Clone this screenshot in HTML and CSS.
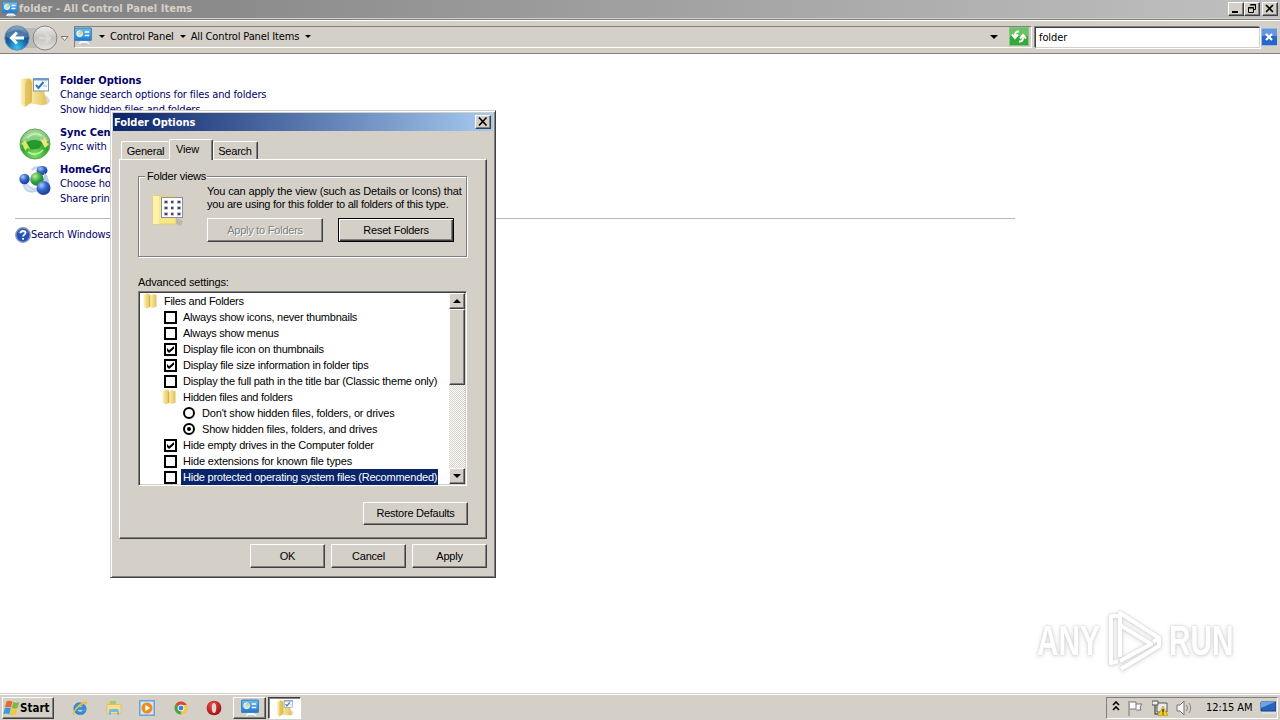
FILE: index.html
```html
<!DOCTYPE html>
<html lang="en">
<head>
<meta charset="utf-8">
<title>folder - All Control Panel Items</title>
<link rel="stylesheet" href="styles.css">
</head>
<body>
<svg class="defs" width="0" height="0">
  <defs>
    <linearGradient id="gold" x1="0" x2="1"><stop offset="0" stop-color="#fff3ae"/><stop offset=".45" stop-color="#e9c94e"/><stop offset=".55" stop-color="#fff0a0"/><stop offset="1" stop-color="#dcb74a"/></linearGradient>
    <linearGradient id="flap" x1="0" x2="1"><stop offset="0" stop-color="#fdf2b5"/><stop offset="1" stop-color="#e3c055"/></linearGradient>
    <linearGradient id="screen" x1="0" x2="0" y1="0" y2="1"><stop offset="0" stop-color="#6cc0f5"/><stop offset="1" stop-color="#2277c6"/></linearGradient>
    <radialGradient id="navblue" cx=".5" cy=".9" r=".9"><stop offset="0" stop-color="#35c8f2"/><stop offset=".45" stop-color="#1568ad"/><stop offset=".75" stop-color="#164b85"/><stop offset="1" stop-color="#8fb9dc"/></radialGradient>
    <linearGradient id="navgrey" x1="0" x2="0" y1="0" y2="1"><stop offset="0" stop-color="#efefed"/><stop offset=".5" stop-color="#c3c2bf"/><stop offset="1" stop-color="#e4e3e0"/></linearGradient>
    <radialGradient id="green" cx=".5" cy=".85" r=".9"><stop offset="0" stop-color="#7fe35b"/><stop offset=".5" stop-color="#2ba52b"/><stop offset="1" stop-color="#b9e3ad"/></radialGradient>
    <radialGradient id="ballblue" cx=".35" cy=".3" r=".8"><stop offset="0" stop-color="#a9cdf8"/><stop offset=".45" stop-color="#3566c8"/><stop offset="1" stop-color="#15318d"/></radialGradient>
    <radialGradient id="ballgreen" cx=".35" cy=".3" r=".8"><stop offset="0" stop-color="#b6f0a5"/><stop offset=".5" stop-color="#35a53c"/><stop offset="1" stop-color="#14702a"/></radialGradient>
    <radialGradient id="red" cx=".4" cy=".3" r=".8"><stop offset="0" stop-color="#e8504b"/><stop offset="1" stop-color="#960810"/></radialGradient>
    <symbol id="cpanel" viewBox="0 0 16 16">
      <path d="M6 12h5l3 3H4z" fill="#f5f8fb"/><rect x=".5" y="1" width="15" height="11" rx="1" fill="url(#screen)" stroke="#3a86c4"/>
      <circle cx="5" cy="6" r="2.600" fill="#bfe2f7" stroke="#fff" stroke-width=".8"/><path d="M5 6V3.400A2.600 2.600 0 0 1 7.600 6z" fill="#f2cf4a"/>
      <path d="M9.500 4.500h4M9.500 7.500h4" stroke="#fff" stroke-width="1.300"/><path d="M6 15h6" stroke="#aebac5"/>
    </symbol>
    <symbol id="folder" viewBox="0 0 16 16">
      <path d="M1.500 2 5 .5l3 1v12L5 15.500 1.500 14z" fill="url(#flap)"/><path d="M8 2.500 11 1l3.500 1v11.500L11 15l-3-1z" fill="url(#flap)"/><path d="M7.800 3v11" stroke="#c6a43d" stroke-width=".8"/>
    </symbol>
    <symbol id="folderopt" viewBox="0 0 32 32">
      <path d="M20 29c6 1 11-1 11-5l-4-5z" fill="#aaa" opacity=".45"/>
      <path d="M8 3h14l5 20 1 5-6 1-14-2z" fill="url(#flap)"/>
      <path d="M2 3 10 2q3 2 3 6v18l-7 5-4-3z" fill="url(#flap)"/><path d="M8 3q5 0 5 6v17l-7 5V9z" fill="#d9b24a" opacity=".55"/>
      <rect x="14.500" y="2.500" width="15" height="12.500" fill="#f7fbff" stroke="#7f95ac"/><path d="M14 3.500h16" stroke="#6c9dd0" stroke-width="2"/><path d="m17 9 2.500 3 5-6" fill="none" stroke="#2b75c5" stroke-width="2"/><path d="M24 10h4" stroke="#aab8c7"/>
    </symbol>
    <symbol id="e" viewBox="0 0 16 16">
      <path d="M14.300 9.600H5.400c.3 3.200 4.400 3.200 5.200 1.100h3.400C12.600 16.400 1.800 16 1.800 8.500c0-8 12.500-7.500 12.500 1.100zM5.400 7.200h5.400c-.3-2.800-5.100-2.800-5.400 0z" fill="#2f91dc" fill-rule="evenodd" stroke="#1767af" stroke-width=".5"/>
      <path d="M2.600 14.800C-.8 16.500.5 10.500 6 5.500c4.500-4 9.500-5.200 9-2.200-.1.700-.4 1.300-.8 2 .3-2.500-2.600-1.800-6.300 1C3.300 9.800 1.200 13.900 2.600 14.800z" fill="#e9bb40"/>
    </symbol>
  </defs>
</svg>

<div class="desktop">
  <header class="titlebar">
    <svg class="i16"><use href="#cpanel"/></svg>
    <span class="caption caption-main">folder - All Control Panel Items</span>
    <span class="winbtn"><svg width="13" height="11"><path d="M3 9h6" stroke="#000" stroke-width="2"/></svg></span>
    <span class="winbtn"><svg width="13" height="11"><path d="M5.500 1.500h5v5h-2M5 2h6M3 5h6M3.500 4.500v5h5v-5z" fill="none" stroke="#000"/></svg></span>
    <span class="winbtn gap"><svg width="13" height="11"><path d="m3 2 7 7m0-7-7 7" stroke="#000" stroke-width="1.600"/></svg></span>
  </header>

  <nav class="navbar">
    <svg class="arrows" width="70" height="30" viewBox="0 0 70 30">
      <rect x="18" y="5" width="28" height="20" fill="#bcbab6"/>
      <circle cx="17" cy="15" r="12.200" fill="url(#navblue)" stroke="#6f8fae"/><path d="M6 14a11 9.500 0 0 1 22 0q-11 3-22 0z" fill="#fff" opacity=".23"/>
      <path d="M24 15H12m5-5.500L11.500 15l5.500 5.500" fill="none" stroke="#fff" stroke-width="3"/>
      <circle cx="45" cy="15" r="12" fill="url(#navgrey)" stroke="#888682"/><path d="M39 15h11m-5-5 5 5-5 5" fill="none" stroke="#d9d8d5" stroke-width="2.500"/>
      <path d="M61 13.500h7l-3.500 4z" fill="#fff" stroke="#777"/>
    </svg>
    <div class="address">
      <svg class="i18 place"><use href="#cpanel"/></svg>
      <i class="tri t1"></i><span class="crumb">Control Panel</span>
      <i class="tri t2"></i><span class="crumb">All Control Panel Items</span>
      <i class="tri t3"></i>
      <i class="tri big"></i>
      <svg class="refresh" width="20" height="19" viewBox="0 0 20 19"><rect x=".5" y=".5" width="19" height="18" fill="#34a83a" stroke="#86c489"/><path d="M1 1h18v8H1z" fill="#6cc365"/><path d="M10 4.500Q6 4 6 9M3 7.500 6 11l3-3.500M10 14.500q4 .5 4-4M11 11.500 14 8l3 3.500" fill="none" stroke="#fff" stroke-width="2"/></svg>
    </div>
    <div class="search"><span class="query">folder</span></div>
    <svg class="clear" width="16" height="18" viewBox="0 0 16 18"><rect x=".5" y=".5" width="16" height="17" fill="#2866c9" stroke="#9bb8e4"/><path d="M1 1h15v7H1z" fill="#6695df"/><path d="m5 6 6 6m0-6-6 6" stroke="#fff" stroke-width="2.200"/></svg>
  </nav>

  <main class="content">
    <section class="entry e1">
      <svg class="i32"><use href="#folderopt"/></svg>
      <div class="links"><b>Folder Options</b><a>Change search options for files and folders</a><a class="narrow">Show hidden files and folders</a></div>
    </section>
    <section class="entry e2">
      <svg class="i32" viewBox="0 0 32 32"><circle cx="16" cy="16" r="15" fill="url(#green)" stroke="#5d9f59"/><path d="M3 13a13.500 12 0 0 1 26 0q-13 3-26 0z" fill="#fff" opacity=".35"/><path d="M8 14q7-4 15 0l-2 6q-5 2-10 1z" fill="#25992e"/><path d="m21 11 3 1q1-2 1-3 3 3 3 6l2 1-4 4z" fill="#f3e47e"/><path d="m11 21-3-1q-1 2-1 3-3-3-3-6l-2-1 4-4z" fill="#dbe66a"/><path d="M8 10q7-7 15-2M24 22q-7 7-15 2" fill="none" stroke="#c5eeb0" stroke-width="1.600"/></svg>
      <div class="links"><b>Sync Cen</b><a>Sync with</a></div>
    </section>
    <section class="entry e3">
      <svg class="i32" viewBox="0 0 32 32"><path d="M5 16q5 10 16 8-9 5-14 0-3-3-2-8M13 5q4-4 8-2M28 14q3 6-1 10" stroke="#c3d5eb" stroke-width="2.500" fill="none"/><ellipse cx="23" cy="5.500" rx="5.500" ry="4.500" fill="url(#ballblue)"/><circle cx="5.500" cy="14" r="5.200" fill="url(#ballblue)"/><path d="M25 8q5 2 4 9l-4 1z" fill="#b7cdea"/><circle cx="18" cy="14" r="6.800" fill="url(#ballgreen)"/><circle cx="24.500" cy="23" r="7" fill="url(#ballblue)"/></svg>
      <div class="links"><b>HomeGro</b><a>Choose ho</a><a>Share prin</a></div>
    </section>
    <div class="rule"></div>
    <div class="helpline">
      <svg class="i16" viewBox="0 0 16 16"><circle cx="8" cy="8" r="7.200" fill="#2451b5" stroke="#8795b8" stroke-width="1.500"/><path d="M3 6q5-7 10 0z" fill="#87aae8" opacity=".6"/><path d="M5.500 6.200C5.600 3 10.700 3.200 10.500 6c-.1 1.600-2.400 1.700-2.400 3.600M8.100 11v1.800" stroke="#fff" stroke-width="1.700" fill="none"/></svg>
      <a>Search Windows</a>
    </div>
    <div class="watermark">
      <span class="any">ANY</span>
      <svg width="58" height="66" viewBox="0 0 58 66"><g fill="none" stroke="#fff" stroke-width="4" stroke-linejoin="round"><path d="M13 8H6v47l7-2"/><path d="M15 49V5l39 25-6 4"/><path d="M15 17l31 19-31 17"/><path d="m16 61 38-23v-7"/></g></svg>
      <span class="run">RUN</span>
    </div>
  </main>

  <footer class="taskbar">
    <div class="start"><svg width="17" height="16" viewBox="0 0 17 16"><path d="M3.500 1.500q3-1.500 6 0L8 7.500q-3-1.400-6 0z" fill="#e8682f"/><path d="M10.200 2q3 1.400 6 0l-1.500 6q-3 1.300-6 0z" fill="#7eba43"/><path d="M1.800 8.200q3-1.400 6 0l-1.500 6q-3-1.400-6 0z" fill="#3b9bd9"/><path d="M8.500 8.700q3 1.400 6 0l-1.500 6q-3 1.300-6 0z" fill="#f5c83c"/></svg><b>Start</b></div>
    <div class="quick">
      <svg class="i16"><use href="#e"/></svg>
      <svg class="i16" viewBox="0 0 16 16"><path d="M1 2h5l1 1.500h7V9H1z" fill="#e8ce68"/><path d="M4 1h6v5H4z" fill="#a6c976"/><path d="M1 4.500h14v9H1z" fill="#f5df8d" stroke="#d5b65b" stroke-width=".6"/><path d="M3 15v-4q0-2 2-2h6q2 0 2 2v4h-2v-3H5v3z" fill="#75b9e5"/></svg>
      <svg class="i16" viewBox="0 0 16 16"><rect x=".8" y=".8" width="14.400" height="14.400" fill="#d4e8f8" stroke="#5fa0d8" stroke-width="1.400"/><circle cx="8" cy="8" r="5.500" fill="#f08a1c"/><path d="M6.300 4.800v6.400L11 8z" fill="#fff"/></svg>
      <svg class="i16" viewBox="0 0 16 16"><circle cx="8" cy="8" r="6.500" fill="#ddb72e"/><path d="M8 8 2.400 4.700A6.500 6.500 0 0 1 13.700 5H8z" fill="#d94638"/><path d="M2.400 4.700 8 8l-.3 6.500A6.500 6.500 0 0 1 2.400 4.700z" fill="#43a552"/><path d="M8 5h5.700A6.500 6.500 0 0 1 7.700 14.500L10.500 9z" fill="#f4cb3a"/><circle cx="8" cy="8" r="3" fill="#3e83da" stroke="#fff"/></svg>
      <svg class="i16" viewBox="0 0 16 16"><ellipse cx="8" cy="8" rx="7.400" ry="7.300" fill="url(#red)"/><ellipse cx="8" cy="8" rx="2.200" ry="5" fill="#e8d5cf"/></svg>
    </div>
    <div class="task"><svg class="i18"><use href="#cpanel"/></svg></div>
    <div class="task active"><svg class="i18" viewBox="0 0 32 32"><use href="#folderopt"/></svg></div>
    <div class="tray">
      <svg class="chev" width="8" height="10"><path d="m1 4 3-3 3 3M1 9l3-3 3 3" fill="none" stroke="#000" stroke-width="1.600"/></svg>
      <svg class="flag" width="16" height="16"><path d="M2 1v15M3 2h6v7H3M9 4h6l-2 3 1 3H9" fill="#fff" stroke="#777"/></svg>
      <svg class="net" width="16" height="16"><path d="M5 3h10v9H5z" fill="#e8eaf0" stroke="#555"/><path d="M0 1h6v4H0z" fill="#eee" stroke="#555"/><path d="M3 5v9h3" fill="none" stroke="#555" stroke-width="1.300"/><path d="m11 6 5 9.500H6z" fill="#f7cf16" stroke="#a98208" stroke-width=".5"/><path d="M11 9v3.500m0 1v1" stroke="#222" stroke-width="1.300"/></svg>
      <svg class="vol" width="17" height="16"><path d="M1 5h3l4-4v14l-4-4H1z" fill="#f4f4f4" stroke="#777"/><path d="M10.500 5q2 3 0 6M13 3q3.500 5 0 10" fill="none" stroke="#888"/></svg>
      <span class="clock">12:15 AM</span>
      <svg class="show" width="16" height="13"><path d="M1 1h15v9H1z" fill="#2464bb" stroke="#174788"/><path d="M1 1h14L1 7z" fill="#69a4e4"/><path d="M2 12h14" stroke="#e7edf4"/></svg>
    </div>
  </footer>

  <div class="dialog">
    <div class="dlgtitle"><span class="caption">Folder Options</span><span class="winbtn"><svg width="13" height="11"><path d="m3 1.500 7.500 8m0-8-7.500 8" stroke="#000" stroke-width="1.700"/></svg></span></div>
    <div class="tabs"><span class="tab general">General</span><span class="tab view">View</span><span class="tab find">Search</span></div>
    <div class="pane">
      <div class="group">
        <span class="legend">Folder views</span>
        <svg class="viewicon" width="34" height="34" viewBox="0 0 34 34"><path d="M1 3h23v28H1z" fill="#f8e784" stroke="#e3ce68"/><path d="M1 3h6v28H1z" fill="#fff3a9"/><path d="m24 25 7 3-2 5-5-2z" fill="#bbb8aa"/><rect x="9.500" y="4.500" width="21" height="20" fill="#fff" stroke="#8c8ba8"/><path d="M12 9h4m3 0h3m3 0h4M12 15h4m3 0h3m3 0h4M12 21h4m3 0h3m3 0h4" stroke="#a99ab9" stroke-width="3"/><path d="M13 9h2m4 0h2m5 0h2M13 15h2m4 0h2m5 0h2M13 21h2m4 0h2m5 0h2" stroke="#31455f" stroke-width="2"/></svg>
        <div class="groupbody">
          <p><span class="p1">You can apply the view (such as Details or Icons) that</span><br><span class="p2">you are using for this folder to all folders of this type.</span></p>
          <div class="pair"><span class="btn disabled">Apply to Folders</span><span class="btn default">Reset Folders</span></div>
        </div>
      </div>
      <div class="adv">Advanced settings:</div>
      <div class="listbox">
        <div class="rows">
          <div class="row"><svg class="i16"><use href="#folder"/></svg><span class="tight">Files and Folders</span></div>
          <div class="row l1"><i class="box"></i><span>Always show icons, never thumbnails</span></div>
          <div class="row l1"><i class="box"></i><span>Always show menus</span></div>
          <div class="row l1"><i class="box on"></i><span>Display file icon on thumbnails</span></div>
          <div class="row l1"><i class="box on"></i><span>Display file size information in folder tips</span></div>
          <div class="row l1"><i class="box"></i><span>Display the full path in the title bar (Classic theme only)</span></div>
          <div class="row l1f"><svg class="i16"><use href="#folder"/></svg><span>Hidden files and folders</span></div>
          <div class="row l2"><i class="radio"></i><span class="loose">Don't show hidden files, folders, or drives</span></div>
          <div class="row l2"><i class="radio on"></i><span class="loose">Show hidden files, folders, and drives</span></div>
          <div class="row l1"><i class="box on"></i><span>Hide empty drives in the Computer folder</span></div>
          <div class="row l1"><i class="box"></i><span class="loose">Hide extensions for known file types</span></div>
          <div class="row l1"><i class="box"></i><span class="selected">Hide protected operating system files (Recommended)</span></div>
        </div>
        <div class="scroll"><span class="sb"><i class="up"></i></span><span class="thumb"></span><span class="track"></span><span class="sb"><i class="down"></i></span></div>
      </div>
      <div class="restore"><span class="btn">Restore Defaults</span></div>
    </div>
    <div class="actions"><span class="btn">OK</span><span class="btn">Cancel</span><span class="btn">Apply</span></div>
  </div>
</div>
</body>
</html>
```
FILE: styles.css
```css
* { box-sizing: border-box; }
body { margin: 0; background: #fff; font: 11px/14px "DejaVu Sans Condensed", "DejaVu Sans", sans-serif; font-stretch: condensed; color: #000; }
svg { display: block; flex: none; }
.defs { position: absolute; }
.i16 { width: 16px; height: 16px; }
.i18 { width: 18px; height: 18px; }
.i32 { width: 32px; height: 32px; }
.desktop { width: 1280px; height: 720px; display: flex; flex-direction: column; position: relative; overflow: hidden; white-space: nowrap; }

.titlebar { height: 18px; display: flex; align-items: center; padding: 0 2px; background: linear-gradient(90deg, #808080, #c0c0c0); }
.caption { font-weight: bold; letter-spacing: -.05px; padding-top: 1px; }
.caption-main { flex: 1; margin-left: 1px; padding-top: 0; color: #d4d0c8; letter-spacing: .04px; }
.winbtn { width: 16px; height: 14px; background: #d4d0c8; border: 1px solid; border-color: #fff #404040 #404040 #fff; box-shadow: inset -1px -1px #808080; }
.winbtn.gap { margin-left: 2px; }

.navbar { height: 36px; display: flex; align-items: center; background: #d4d0c8; border-top: 1px solid #d4d0c8; border-bottom: 1px solid #808080; box-shadow: inset 0 1px #808080, inset 0 2px #fff; }
.arrows { margin-top: 3px; }
.address { width: 958px; height: 22px; margin: 1px 0 0 4px; display: flex; align-items: center; border: 1px solid; border-color: #808080 #fff #fff #808080; }
.place { margin: -2px 1px 0 -1px; }
.crumb { letter-spacing: -.14px; }
.tri { border: 3px solid transparent; border-top: 3px solid #000; border-bottom: 0; }
.t1 { margin: 0 5px 0 6px; }
.t2 { margin: 0 5px 0 6px; }
.t3 { margin-left: 6px; }
.big { border-width: 4px 4px 0; margin-left: auto; }
.refresh { margin: 0 2px 0 11px; }
.search { width: 225px; height: 21px; margin: 2px 0 0 3px; padding: 3px 3px; background: #fff; border: 1px solid; border-color: #404040 #d4d0c8 #d4d0c8 #404040; box-shadow: -1px -1px #808080, 1px 1px #fff; letter-spacing: -.1px; }
.clear { margin: 2px 0 0 1px; }

.content { flex: 1; padding-top: 19px; background: #fff; color: #00006c; }
.entry { display: flex; padding-left: 19px; }
.entry .i32 { margin-top: 3px; }
.links { margin-left: 9px; display: flex; flex-direction: column; }
.links b { height: 14px; line-height: 15px; letter-spacing: -.05px; }
.links a { height: 15px; line-height: 15px; letter-spacing: -.14px; }
.links .narrow { letter-spacing: -.2px; }
.e1 { height: 52px; }
.e2 { height: 37px; }
.e3 { height: 50px; }
.e3 .i32 { margin-top: 3px; }
.rule { width: 1000px; height: 1px; margin: 6px 0 8px 15px; background: #b8b8b8; }
.helpline { display: flex; align-items: center; padding-left: 15px; letter-spacing: -.12px; }
.watermark { width: 200px; height: 70px; margin: 363px 0 0 1037px; display: flex; align-items: center; color: #fff; font: 42px/60px "Liberation Sans", sans-serif; filter: drop-shadow(0 0 1px #ccc) drop-shadow(0 1px 2px #ddd); }
.any, .run { width: 67px; transform: scaleX(.71); transform-origin: left; font-weight: bold; }
.watermark svg { margin: 0 6px 0 1px; }
.run { width: 64px; }

.taskbar { height: 27px; display: flex; align-items: center; background: #d4d0c8; border-top: 1px solid #d4d0c8; box-shadow: inset 0 1px #fff; }
.start { width: 52px; height: 22px; margin: 1px 0 0 2px; display: flex; align-items: center; border: 1px solid; border-color: #fff #404040 #404040 #fff; box-shadow: inset -1px -1px #808080; font-size: 11.500px; }
.quick { display: flex; gap: 17.500px; margin: 1px 11px 0 18px; }
.task { width: 33px; height: 22px; margin: 1px 2px 0 0; display: flex; align-items: center; justify-content: center; border: 1px solid; border-color: #fff #404040 #404040 #fff; box-shadow: inset -1px -1px #808080; }
.task.active { background: #fff; border-color: #404040 #fff #fff #404040; box-shadow: inset 1px 1px #808080; }
.tray { width: 172px; height: 22px; margin: 1px 2px 0 auto; padding-left: 5px; display: flex; align-items: center; border: 1px solid; border-color: #808080 #fff #fff #808080; }
.chev { margin-top: -3px; }
.flag { margin-left: 7px; }
.net { margin-left: 9px; }
.vol { margin-left: 8px; }
.clock { width: 47px; margin-left: 13px; letter-spacing: -.05px; }
.show { margin-left: 7px; }

.dialog { position: absolute; left: 110px; top: 110px; width: 386px; height: 468px; padding: 2px; display: flex; flex-direction: column; background: #d4d0c8; border: 1px solid; border-color: #d4d0c8 #404040 #404040 #d4d0c8; box-shadow: inset 1px 1px #fff, inset -1px -1px #808080; font-family: "Liberation Sans", Arial, sans-serif; letter-spacing: -.22px; }
.dlgtitle { height: 18px; display: flex; align-items: center; justify-content: space-between; padding: 0 2px 0 1px; background: linear-gradient(90deg, #0a246a, #a6caf0); color: #fff; font-family: "DejaVu Sans Condensed", sans-serif; }
.tabs { display: flex; align-items: flex-end; height: 28px; padding-left: 8px; }
.tab { height: 18px; padding-top: 2px; text-align: center; border: 1px solid; border-color: #fff #404040 transparent #fff; border-bottom: 0; border-radius: 2px 2px 0 0; box-shadow: inset -1px 0 #808080; }
.general { width: 48px; border-right: 0; box-shadow: none; }
.view { width: 44px; height: 21px; padding: 2px 7px 0 0; margin-bottom: -1px; background: #d4d0c8; z-index: 1; }
.find { width: 45px; padding-right: 1px; }
.pane { width: 368px; height: 380px; margin-left: 6px; padding: 16px 18px 0; border: 1px solid; border-color: #fff #404040 #404040 #fff; box-shadow: inset -1px -1px #808080; }
.group { position: relative; width: 329px; height: 81px; display: flex; border: 1px solid #808080; box-shadow: 1px 1px #fff, inset 1px 1px #fff; }
.legend { position: absolute; left: 6px; top: -7px; padding: 0 1px 0 2px; line-height: 13px; background: #d4d0c8; }
.viewicon { margin: 16px 0 0 13px; }
.groupbody { margin: 7px 0 0 21px; }
.groupbody p { margin: 1px 0 7px; line-height: 13px; }
.p1 { letter-spacing: -.11px; }
.p2 { letter-spacing: -.22px; }
.pair { display: flex; gap: 15px; }
.btn { width: 116px; height: 24px; display: block; line-height: 23px; text-align: center; border: 1px solid; border-color: #fff #404040 #404040 #fff; box-shadow: inset -1px -1px #808080; letter-spacing: -.24px; }
.btn.default { border-color: #000; box-shadow: inset 1px 1px #fff, inset -1px -1px #404040, inset -2px -2px #808080; }
.btn.disabled { color: #808080; text-shadow: 1px 1px #fff; }
.adv { margin-top: 18px; height: 16px; letter-spacing: -.12px; }
.listbox { width: 329px; height: 195px; display: flex; background: #fff; border: 1px solid; border-color: #808080 #fff #fff #808080; box-shadow: inset 1px 1px #404040, inset -1px -1px #d4d0c8; padding: 1px; }
.rows { flex: 1; min-width: 0; }
.row { height: 16px; display: flex; align-items: center; padding-left: 2px; line-height: 16px; letter-spacing: -.23px; }
.row svg + span { margin-left: 6px; }
.row i + span { padding: 0 2px; margin-left: 4px; }
.row .tight { letter-spacing: -.28px; }
.row .loose { letter-spacing: -.18px; }
.l1 { padding-left: 24px; }
.l1f { padding-left: 21px; }
.l2 { padding-left: 43px; }
.box, .radio { width: 13px; height: 13px; flex: none; margin-top: 1px; border: 2px solid #000; display: flex; align-items: center; justify-content: center; }
.box.on::after { content: ""; flex: none; width: 7px; height: 7px; background: #000; clip-path: polygon(0 30%, 30% 60%, 100% 0, 100% 38%, 30% 100%, 0 70%); }
.radio { width: 12px; height: 12px; margin: 0 1px 0 0; border-radius: 50%; }
.radio.on::after { content: ""; width: 4px; height: 4px; background: #000; border-radius: 50%; }
.row .selected { padding-right: 1px; background: #0a246a; color: #fff; }
.scroll { width: 16px; flex: none; display: flex; flex-direction: column; }
.sb, .thumb { height: 16px; display: flex; align-items: center; justify-content: center; background: #d4d0c8; border: 1px solid; border-color: #fff #404040 #404040 #fff; box-shadow: inset -1px -1px #808080; }
.thumb { height: 76px; }
.track { flex: 1; background: repeating-conic-gradient(#fff 0 25%, #d4d0c8 0 50%) 0 0/2px 2px; }
.up, .down { border: 4px solid transparent; border-top: 0; border-bottom: 4px solid #000; }
.down { border-top: 4px solid #000; border-bottom: 0; }
.restore { margin: 16px 0 0 225px; }
.restore .btn { width: 105px; height: 23px; line-height: 21px; }
.actions { display: flex; justify-content: flex-end; gap: 6px; margin: 5px 6px 0 0; }
.actions .btn { width: 75px; }
```
